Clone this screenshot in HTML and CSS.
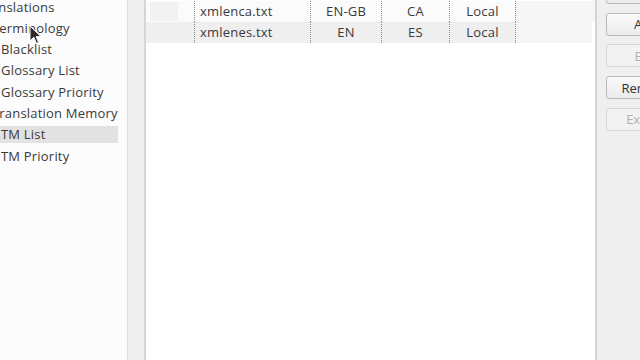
FILE: index.html
```html
<!DOCTYPE html>
<html>
<head>
    <title>Translation Memory - TM List</title>
    <link rel="stylesheet" href="styles.css">
</head>
<body>
    <div class="window">
        <!-- category tree, scrolled a little to the right -->
        <div class="sidebar">
            <ul class="tree">
                <li class="item first">Translations</li>
                <li class="item parent">Terminology</li>
                <li class="item">Blacklist</li>
                <li class="item">Glossary List</li>
                <li class="item">Glossary Priority</li>
                <li class="item parent">Translation Memory</li>
                <li class="item selected">TM List</li>
                <li class="item">TM Priority</li>
            </ul>
        </div>

        <div class="sash"></div>

        <!-- tm files table -->
        <div class="list">
            <div class="row">
                <div class="cell check"><span class="box"></span></div>
                <div class="cell name">xmlenca.txt</div>
                <div class="cell lang">EN-GB</div>
                <div class="cell lang2">CA</div>
                <div class="cell kind">Local</div>
                <div class="cell rest"></div>
            </div>
            <div class="row alt">
                <div class="cell check"></div>
                <div class="cell name">xmlenes.txt</div>
                <div class="cell lang">EN</div>
                <div class="cell lang2">ES</div>
                <div class="cell kind">Local</div>
                <div class="cell rest"></div>
            </div>
        </div>

        <div class="divider"></div>

        <!-- action buttons -->
        <div class="actions">
            <button class="btn">Import</button>
            <button class="btn">Add</button>
            <button class="btn" disabled>Edit</button>
            <button class="btn">Remove</button>
            <button class="btn" disabled>Export</button>
        </div>

        <svg class="cursor" width="13" height="20" viewBox="0 0 13 20">
            <path d="M1 1 L1 16 L4.8 12.2 L7.4 18.4 L9.6 17.4 L7.1 11.6 L12 11.6 Z" fill="#2b2b2b" stroke="#ffffff" stroke-width="1"/>
        </svg>
    </div>
</body>
</html>
```

FILE: styles.css
```css
body {
    margin: 0;
    font-family: "Open Sans", "DejaVu Sans", sans-serif;
    font-size: 13px;
    color: #3a3a3a;
}
.window {
    position: relative;
    width: 640px;
    height: 360px;
    overflow: hidden;
    display: grid;
    grid-template-columns: 127px 19px 449px 2px 43px;
}
.sidebar {
    background-color: #fcfcfc;
    overflow: hidden;
    padding-right: 9px;
}
.tree {
    list-style: none;
    margin: -1.5px 0 0 0;
    padding: 0;
    display: flex;
    flex-direction: column;
    gap: 4.33px;
}
.item {
    height: 17px;
    line-height: 17px;
    padding-left: 1px;
    white-space: nowrap;
    letter-spacing: 0.2px;
}
.item.first {
    margin-left: -23px;
}
.item.parent {
    margin-left: -9px;
}
.item.selected {
    background-color: #e2e2e2;
}
.sash {
    background-color: #efefef;
    border-left: 1px solid #dedede;
    border-right: 2px solid #d6d6d6;
}
.list {
    background-color: #ffffff;
    padding-top: 1px;
}
.row {
    display: grid;
    grid-template-columns: 48px 116px 71px 68px 66px 1fr;
    height: 21px;
    line-height: 21px;
    background-color: #fbfbfb;
}
.row.alt {
    background-color: #efefef;
    margin-right: 3px;
}
.cell {
    border-left: 1px dotted #8a8a8a;
    white-space: nowrap;
    text-align: center;
    letter-spacing: 0.2px;
}
.cell.check {
    border-left: none;
}
.cell.name {
    text-align: left;
    padding-left: 5px;
}
.cell.rest {
    background-color: #f6f6f6;
}
.box {
    display: block;
    width: 28px;
    height: 19px;
    margin: 1px 0 0 4px;
    background-color: #f2f2f2;
}
.divider {
    background-color: #d4d4d4;
}
.actions {
    background-color: #efefef;
    padding-left: 9px;
    display: flex;
    flex-direction: column;
    gap: 8.7px;
    margin-top: -19px;
}
.btn {
    flex: none;
    width: 80px;
    height: 23px;
    padding: 0;
    font-family: "Open Sans", "DejaVu Sans", sans-serif;
    font-size: 13px;
    color: #333;
    background: linear-gradient(#fafafa, #ebebeb);
    border: 1px solid #b9b9b9;
    border-radius: 3px;
}
.btn:disabled {
    color: #b0b0b0;
    background: #f2f2f2;
    border-color: #d6d6d6;
}
.cursor {
    position: absolute;
    left: 29px;
    top: 25px;
}
```
